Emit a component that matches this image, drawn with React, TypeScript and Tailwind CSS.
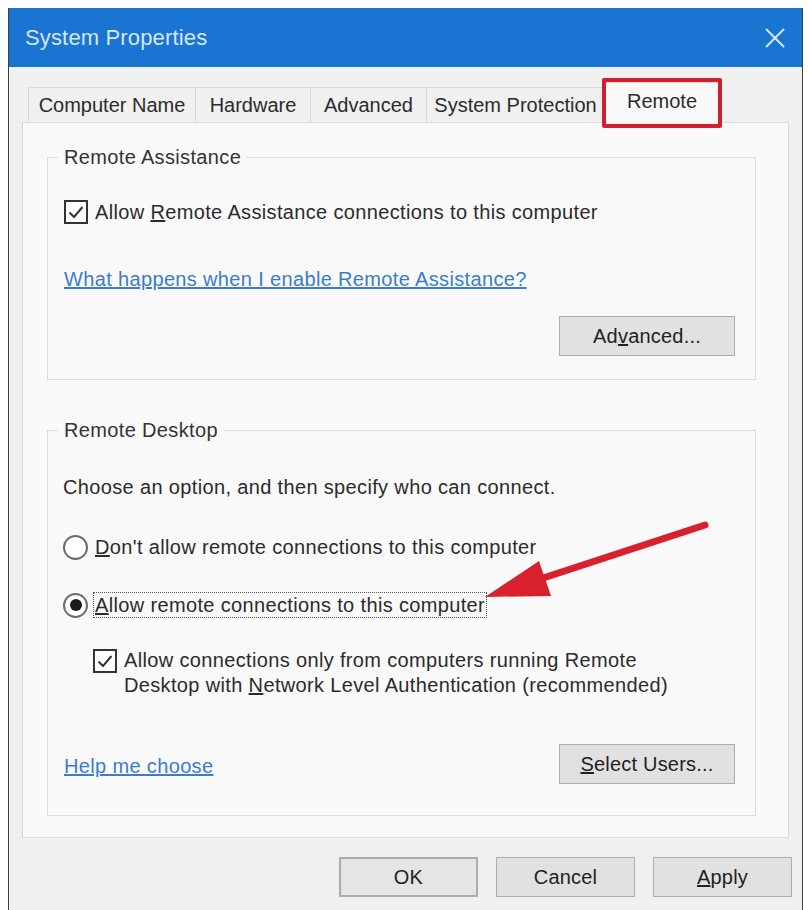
import React from 'react';

const Check = () => (
  <span className="w-[24px] h-[24px] border-2 border-[#333333] bg-white flex items-center justify-center shrink-0">
    <svg width="18" height="18" viewBox="0 0 18 18" fill="none">
      <path d="M2.5 9.5 L7 14 L15.5 4" stroke="#333333" strokeWidth="2" />
    </svg>
  </span>
);

const Radio = ({ on }: { on?: boolean }) => (
  <span className="w-[25px] h-[25px] rounded-full border-2 border-[#6b6b6b] bg-white flex items-center justify-center shrink-0">
    {on && <span className="w-[12px] h-[12px] rounded-full bg-[#1a1a1a]" />}
  </span>
);

const Btn = ({ children, className = '' }: { children: React.ReactNode; className?: string }) => (
  <button className={`h-[40px] bg-[#e1e1e1] border border-[#adadad] text-[20px] tracking-[0.2px] text-[#222] ${className}`}>
    {children}
  </button>
);

export default function App() {
  const tabs = [
    { label: 'Computer Name', w: 'w-[167px]' },
    { label: 'Hardware', w: 'w-[115px]' },
    { label: 'Advanced', w: 'w-[116px]' },
    { label: 'System Protection', w: 'w-[178px]' },
  ];

  return (
    <div className="w-[808px] h-[910px] bg-white pt-[8px] pl-[8px] font-['Liberation_Sans',Arial,sans-serif] text-[#2b2b2b] overflow-hidden">
      <div className="relative w-[795px] h-[902px] flex flex-col border-l border-r border-[#3c3c3c] bg-[#f0f0f0]">
        {/* title bar */}
        <div className="h-[59px] bg-[#1a74d2] flex items-center justify-between pl-[16px] pr-[16px] shrink-0">
          <span className="text-[22px] text-[#d3e6fa] tracking-[0.15px]">System Properties</span>
          <svg width="22" height="22" viewBox="0 0 22 22">
            <path d="M2 2 L20 20 M20 2 L2 20" stroke="#d3e6fa" strokeWidth="2" />
          </svg>
        </div>

        {/* tabs */}
        <div className="flex items-end pl-[19px] mt-[15px] h-[41px] -mb-px relative z-10">
          {tabs.map((t) => (
            <div
              key={t.label}
              className={`${t.w} h-[36px] border border-r-0 border-[#d9d9d9] bg-[#f0f0f0] flex items-center justify-center text-[20px] text-[#2b2b2b]`}
            >
              {t.label}
            </div>
          ))}
          <div className="relative w-[116px] h-[41px]">
            <div className="w-full h-full border border-b-0 border-[#d9d9d9] bg-[#f9f9f9] flex items-center justify-center pb-[4px] text-[20px]">
              Remote
            </div>
            <span className="absolute -top-[4px] -bottom-[5px] -left-[2px] -right-[2px] border-[4px] border-[#d21f2e] rounded-[2px]" />
          </div>
        </div>

        {/* panel */}
        <div className="ml-[13px] w-[767px] h-[716px] border border-[#d9d9d9] bg-[#f9f9f9] text-[20px] tracking-[0.35px]">
          <fieldset className="ml-[24px] mt-[22px] w-[709px] h-[235px] border border-[#dcdcdc] px-[10px]">
            <legend className="px-[6px] leading-[24px] text-[#333]">Remote Assistance</legend>
            <div className="pl-[6px] pt-[31px] flex flex-col">
              <div className="h-[24px] flex items-center gap-[7px]">
                <Check />
                <span className="leading-[24px]">
                  Allow <u>R</u>emote Assistance connections to this computer
                </span>
              </div>
              <a className="mt-[43px] leading-[24px] text-[#3b7ccd] underline self-start">
                What happens when I enable Remote Assistance?
              </a>
              <div className="mt-[25px] flex justify-end pr-[10px]">
                <Btn className="w-[176px]">
                  Ad<u>v</u>anced...
                </Btn>
              </div>
            </div>
          </fieldset>

          <fieldset className="ml-[24px] mt-[38px] w-[709px] h-[398px] border border-[#dcdcdc] px-[10px]">
            <legend className="px-[6px] leading-[24px] text-[#333]">Remote Desktop</legend>
            <div className="pl-[5px] pt-[33px] flex flex-col">
              <div className="leading-[24px]">Choose an option, and then specify who can connect.</div>
              <div className="mt-[36px] h-[24px] flex items-center gap-[7px]">
                <Radio />
                <span>
                  <u>D</u>on't allow remote connections to this computer
                </span>
              </div>
              <div className="mt-[33px] h-[26px] flex items-center gap-[5px]">
                <Radio on />
                <span className="h-[26px] leading-[24px] border border-dotted border-[#555] px-[1px]">
                  <u>A</u>llow remote connections to this computer
                </span>
              </div>
              <div className="mt-[31px] pl-[30px] flex items-start gap-[7px]">
                <Check />
                <span className="leading-[25px] -mt-[1px]">
                  Allow connections only from computers running Remote
                  <br />
                  Desktop with <u>N</u>etwork Level Authentication (recommended)
                </span>
              </div>
              <div className="mt-[46px] flex items-center justify-between pr-[10px]">
                <a className="text-[#3b7ccd] underline leading-[24px] pl-[1px] mt-[4px]">Help me choose</a>
                <Btn className="w-[176px] h-[39px]">
                  <u>S</u>elect Users...
                </Btn>
              </div>
            </div>
          </fieldset>
        </div>

        {/* bottom buttons */}
        <div className="mt-[19px] flex justify-end gap-[18px] pr-[10px] text-[20px]">
          <Btn className="w-[139px] border-2 border-[#2f73c4] bg-[#e5e5e5]">OK</Btn>
          <Btn className="w-[139px]">Cancel</Btn>
          <Btn className="w-[139px]">
            <u>A</u>pply
          </Btn>
        </div>

        {/* annotation arrow */}
        <svg className="absolute left-0 top-0 pointer-events-none" width="795" height="902" viewBox="8 8 795 902">
          <line x1="704" y1="525" x2="530" y2="582" stroke="#d9202d" strokeWidth="7" strokeLinecap="round" />
          <polygon points="484,597 538,561 550,596" fill="#d9202d" />
        </svg>
      </div>
    </div>
  );
}
